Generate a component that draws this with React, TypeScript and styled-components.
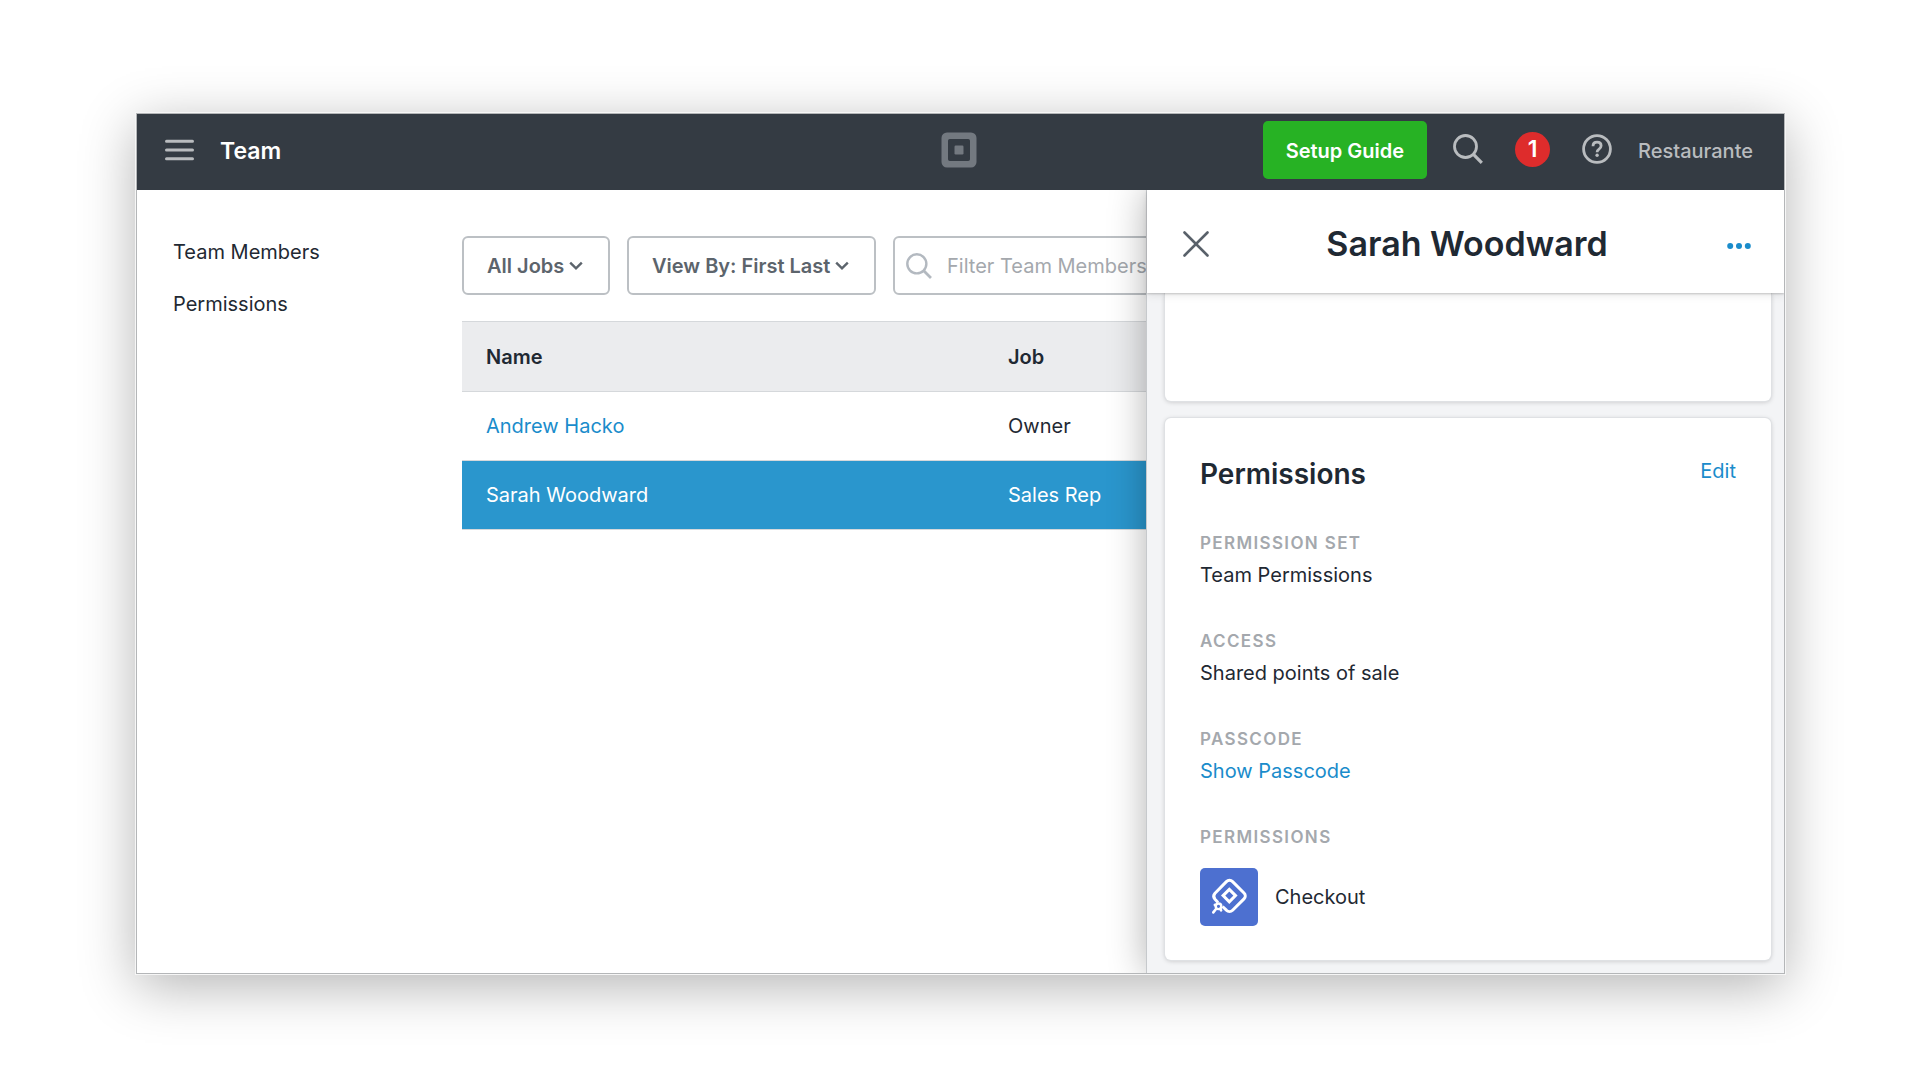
import React from "react";
import styled, { createGlobalStyle, css } from "styled-components";

const color = {
  ink: "#1f2933",
  bar: "#343b43",
  blue: "#1a8ccb",
  selected: "#2a96cd",
  grey: "#a4a8ad",
  line: "#d5d8db",
};

const GlobalStyle = createGlobalStyle`
  *, *::before, *::after { box-sizing: border-box; }
  body {
    margin: 0;
    background: #fff;
    color: ${color.ink};
    font-family: Inter, "Liberation Sans", sans-serif;
    font-size: 20px;
    line-height: 28px;
  }
  button, input, select { font: inherit; color: inherit; }
  svg { display: block; flex: none; }
  a { text-decoration: none; }
`;

const Page = styled.div`
  padding: 113px 135px 113px 136px;
`;

const Window = styled.div`
  border: 1px solid #b4b6b8;
  background: #fff;
  box-shadow: 0 0 0 1px #f6f6f6, 0 12px 52px rgba(0, 0, 0, 0.3);
`;

const TopBar = styled.header`
  display: grid;
  grid-template-columns: 1fr auto 1fr;
  align-items: center;
  padding: 7px 31px 11px 28px;
  background: ${color.bar};
  color: #b9bcbf;
`;

const BarStart = styled.div`
  display: flex;
  align-items: center;
  gap: 26px;
`;

const BarEnd = styled.div`
  display: flex;
  align-items: center;
  justify-content: flex-end;
  gap: 26px;
`;

const PlainButton = styled.button`
  display: inline-flex;
  align-items: center;
  padding: 0;
  border: 0;
  background: none;
  cursor: pointer;
`;

const PageName = styled.h1`
  margin: 0;
  padding-top: 2px;
  color: #fff;
  font-size: 23px;
  font-weight: 600;
`;

const SetupButton = styled.button`
  height: 58px;
  padding: 2px 23px 0;
  border: 0;
  border-radius: 5px;
  background: #27b224;
  color: #fff;
  font-weight: 600;
  cursor: pointer;
`;

const Tools = styled.div`
  display: flex;
  align-items: center;
  gap: 32px;
  padding-bottom: 2px;
`;

const Badge = styled.span`
  display: grid;
  place-items: center;
  width: 35px;
  height: 35px;
  border-radius: 50%;
  background: #de2c2c;
  color: #fff;
  font-size: 23px;
  font-weight: 600;
`;

const Account = styled.a`
  padding-top: 2px;
  color: #b9bcbf;
  font-weight: 500;
`;

const Body = styled.div`
  display: flex;
  overflow: hidden;
`;

const SideNav = styled.nav`
  display: flex;
  flex: none;
  flex-direction: column;
  gap: 24px;
  width: 325px;
  padding: 48px 36px;
`;

const NavLink = styled.a`
  color: ${color.ink};
`;

const Main = styled.main`
  flex: 1;
  min-width: 0;
  padding-top: 46px;
  overflow: hidden;
`;

const Filters = styled.div`
  display: flex;
  gap: 17px;
  margin-bottom: 26px;
`;

const field = css`
  height: 59px;
  border: 2px solid #bcc0c4;
  border-radius: 6px;
  background: #fff;
`;

const SelectBox = styled.label`
  display: grid;
  flex: none;
  align-items: center;
  color: #5c646c;

  select {
    ${field}
    grid-area: 1 / 1;
    appearance: none;
    padding: 0 43px 0 23px;
    font-weight: 600;
  }

  svg {
    grid-area: 1 / 1;
    justify-self: end;
    margin-right: 27px;
    pointer-events: none;
  }
`;

const SearchBox = styled.label`
  display: grid;
  flex: none;
  align-items: center;
  width: 400px;
  color: #b3b9c0;

  input {
    ${field}
    grid-area: 1 / 1;
    width: 100%;
    padding: 0 16px 0 52px;
  }

  input::placeholder {
    color: ${color.grey};
    opacity: 1;
  }

  svg {
    grid-area: 1 / 1;
    margin-left: 13px;
    pointer-events: none;
  }
`;

const Table = styled.table`
  width: 100%;
  border-collapse: collapse;
  table-layout: fixed;

  th,
  td {
    height: 69px;
    padding: 0 24px;
    border-bottom: 1px solid ${color.line};
    text-align: left;
  }

  th {
    height: 70px;
    border-top: 1px solid ${color.line};
    background: #ebecee;
    font-weight: 600;
  }

  th:first-child {
    width: 522px;
  }
`;

const Row = styled.tr<{ $selected?: boolean }>`
  background: ${(p) => (p.$selected ? color.selected : "#fff")};
  color: ${(p) => (p.$selected ? "#fff" : color.ink)};

  a {
    color: ${(p) => (p.$selected ? "#fff" : color.blue)};
  }
`;

const Drawer = styled.aside`
  position: relative;
  flex: none;
  width: 637px;
  background: #f3f4f6;
  box-shadow: 0 0 0 1px #c6c9cc, 0 0 36px rgba(0, 0, 0, 0.32);
`;

const DrawerHeader = styled.div`
  position: relative;
  display: grid;
  grid-template-columns: 1fr auto 1fr;
  align-items: center;
  height: 103px;
  padding: 5px 33px 0 36px;
  background: #fff;
  color: #59616a;
  box-shadow: 0 1px 2px rgba(0, 0, 0, 0.2), 0 3px 8px rgba(0, 0, 0, 0.08);
`;

const DrawerTitle = styled.h2`
  margin: 0;
  color: ${color.ink};
  font-size: 34px;
  font-weight: 600;
  line-height: 40px;
`;

const MenuButton = styled(PlainButton)`
  justify-self: end;
  padding-top: 4px;
  color: ${color.blue};
`;

const CloseButton = styled(PlainButton)`
  justify-self: start;
`;

const Cards = styled.div`
  display: flex;
  flex-direction: column;
  gap: 17px;
  padding: 0 13px 13px 18px;
`;

const Card = styled.section<{ $cut?: boolean }>`
  padding: ${(p) => (p.$cut ? "54px 35px" : "37px 35px 34px")};
  border-radius: ${(p) => (p.$cut ? "0 0 6px 6px" : "6px")};
  background: #fff;
  box-shadow: 0 0 0 1px #dfe1e4, 0 1px 5px rgba(0, 0, 0, 0.2);
`;

const CardHead = styled.div`
  display: flex;
  align-items: flex-start;
  justify-content: space-between;
  margin-bottom: 36px;
`;

const CardTitle = styled.h3`
  margin: 0;
  font-size: 28px;
  font-weight: 600;
  line-height: 38px;
`;

const TextLink = styled.a`
  color: ${color.blue};
`;

const EditLink = styled(TextLink)`
  padding-top: 2px;
`;

const Details = styled.dl`
  display: flex;
  flex-direction: column;
  gap: 38px;
  margin: 0;
`;

const Term = styled.dt`
  margin-bottom: 4px;
  color: ${color.grey};
  font-size: 17px;
  font-weight: 600;
  letter-spacing: 0.08em;
  text-transform: uppercase;
`;

const Value = styled.dd`
  margin: 0;
`;

const AppValue = styled(Value)`
  display: flex;
  align-items: center;
  gap: 17px;
  padding-top: 13px;
`;

const AppIcon = styled.span`
  display: grid;
  place-items: center;
  width: 58px;
  height: 58px;
  border-radius: 5px;
  background: #4d70d0;
  color: #fff;
`;

const Chevron = () => (
  <svg width="14" height="10" viewBox="0 0 14 10" fill="none" stroke="currentColor" strokeWidth="2.4">
    <path d="M1.2 1.6 7 7.4l5.800-5.800" />
  </svg>
);

const Magnifier = ({ size, weight }: { size: number; weight: number }) => (
  <svg width={size} height={size} viewBox="0 0 30 30" fill="none" stroke="currentColor" strokeWidth={weight}>
    <circle cx="12.500" cy="12.500" r="11" />
    <path d="m20.200 20.200 8.600 8.600" strokeWidth={weight + 0.4} />
  </svg>
);

const Logo = () => (
  <svg width="36" height="36" viewBox="0 0 36 36" fill="#737980" role="img" aria-label="Square">
    <path
      fillRule="evenodd"
      d="M6 .5h24A5.500 5.500 0 0 1 35.500 6v24a5.500 5.500 0 0 1-5.500 5.500H6A5.500 5.500 0 0 1 .5 30V6A5.500 5.500 0 0 1 6 .5Zm2.800 6.500A1.800 1.800 0 0 0 7 8.800v18.400A1.800 1.800 0 0 0 8.800 29h18.400a1.800 1.800 0 0 0 1.800-1.800V8.800A1.800 1.800 0 0 0 27.200 7H8.800Z"
    />
    <rect x="13.500" y="13.500" width="9" height="9" rx="1.200" />
  </svg>
);

const CheckoutMark = () => (
  <svg width="58" height="58" viewBox="0 0 58 58" fill="none" stroke="currentColor" strokeWidth="3" strokeLinejoin="round">
    <path d="M18 34.500l-3-3.200c-1.600-1.800-1.600-4.200 0-6L26.400 13.600c1.800-1.800 4.400-1.800 6.200 0L44 25c1.700 1.700 1.700 4.200 0 5.900L32.600 42.200c-1.800 1.800-4.400 1.800-6.200 0L22.500 38.500" />
    <path d="m29.300 21.400 6.200 6.200-6.200 6.200-6.200-6.200Z" strokeLinejoin="miter" />
    <circle cx="18.500" cy="38.300" r="2.800" strokeWidth="2.400" />
    <path d="M15.800 41.200l-2.500 3.200M20.300 40.800l.8 1.600M15.800 37.800l-1-1" strokeWidth="2.600" strokeLinecap="round" />
  </svg>
);

const App = () => (
  <Page>
    <GlobalStyle />
    <Window>
      <TopBar>
        <BarStart>
          <PlainButton aria-label="Menu">
            <svg width="29" height="22" viewBox="0 0 29 22" stroke="#b9bcbf" strokeWidth="3" strokeLinecap="round">
              <path d="M1.500 2.200h26M1.500 11h26M1.500 19.800h26" />
            </svg>
          </PlainButton>
          <PageName>Team</PageName>
        </BarStart>
        <Logo />
        <BarEnd>
          <SetupButton>Setup Guide</SetupButton>
          <Tools>
            <PlainButton aria-label="Search">
              <Magnifier size={30} weight={2.8} />
            </PlainButton>
            <Badge>1</Badge>
            <PlainButton aria-label="Help">
              <svg width="30" height="30" viewBox="0 0 30 30" fill="none" stroke="#b9bcbf" strokeWidth="2.800">
                <circle cx="15" cy="15" r="13.400" />
                <path d="M11 12.200c0-2.400 1.700-4 4.100-4s4 1.500 4 3.600c0 1.900-1.100 2.700-2.300 3.500-1.200.8-1.700 1.400-1.700 3" />
                <circle cx="15.100" cy="21.300" r="1.700" fill="#b9bcbf" stroke="none" />
              </svg>
            </PlainButton>
          </Tools>
          <Account href="#account">Restaurante</Account>
        </BarEnd>
      </TopBar>

      <Body>
        <SideNav>
          <NavLink href="#members">Team Members</NavLink>
          <NavLink href="#permissions">Permissions</NavLink>
        </SideNav>

        <Main>
          <Filters>
            <SelectBox>
              <select aria-label="Job">
                <option>All Jobs</option>
              </select>
              <Chevron />
            </SelectBox>
            <SelectBox>
              <select aria-label="View by">
                <option>View By: First Last</option>
              </select>
              <Chevron />
            </SelectBox>
            <SearchBox>
              <input type="text" aria-label="Filter Team Members" placeholder="Filter Team Members" />
              <Magnifier size={26} weight={2.8} />
            </SearchBox>
          </Filters>
          <Table>
            <thead>
              <tr>
                <th scope="col">Name</th>
                <th scope="col">Job</th>
              </tr>
            </thead>
            <tbody>
              <Row>
                <td>
                  <a href="#andrew">Andrew Hacko</a>
                </td>
                <td>Owner</td>
              </Row>
              <Row $selected>
                <td>
                  <a href="#sarah">Sarah Woodward</a>
                </td>
                <td>Sales Rep</td>
              </Row>
            </tbody>
          </Table>
        </Main>

        <Drawer>
          <DrawerHeader>
            <CloseButton aria-label="Close">
              <svg width="26" height="26" viewBox="0 0 26 26" stroke="currentColor" strokeWidth="2.600" strokeLinecap="round">
                <path d="m1.500 1.500 23 23M24.500 1.500l-23 23" />
              </svg>
            </CloseButton>
            <DrawerTitle>Sarah Woodward</DrawerTitle>
            <MenuButton aria-label="More actions">
              <svg width="24" height="8" viewBox="0 0 24 8" fill="currentColor">
                <circle cx="3.200" cy="4" r="3" />
                <circle cx="12" cy="4" r="3" />
                <circle cx="20.800" cy="4" r="3" />
              </svg>
            </MenuButton>
          </DrawerHeader>
          <Cards>
            <Card $cut />
            <Card>
              <CardHead>
                <CardTitle>Permissions</CardTitle>
                <EditLink href="#edit">Edit</EditLink>
              </CardHead>
              <Details>
                <div>
                  <Term>Permission set</Term>
                  <Value>Team Permissions</Value>
                </div>
                <div>
                  <Term>Access</Term>
                  <Value>Shared points of sale</Value>
                </div>
                <div>
                  <Term>Passcode</Term>
                  <Value>
                    <TextLink href="#passcode">Show Passcode</TextLink>
                  </Value>
                </div>
                <div>
                  <Term>Permissions</Term>
                  <AppValue>
                    <AppIcon>
                      <CheckoutMark />
                    </AppIcon>
                    Checkout
                  </AppValue>
                </div>
              </Details>
            </Card>
          </Cards>
        </Drawer>
      </Body>
    </Window>
  </Page>
);

export default App;
